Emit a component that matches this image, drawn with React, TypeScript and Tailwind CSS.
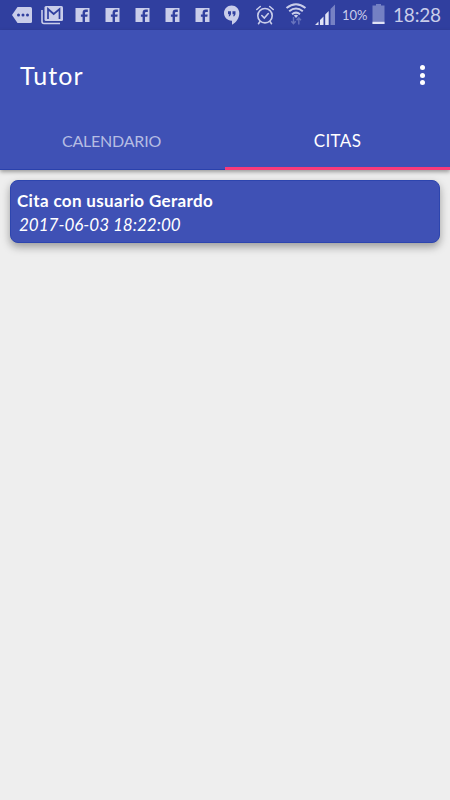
import type { ReactNode } from "react";

type SlotProps = {
  children: ReactNode;
};

const Slot = ({ children }: SlotProps) => (
  <div className="flex w-[30px] shrink-0 justify-center">{children}</div>
);

const MessageIcon = () => (
  <svg width="22" height="30" viewBox="0 0 22 30" fill="#c9cdea">
    <path d="M6.500 7H19.500Q21 7 21 8.500V21.500Q21 23 19.500 23H6.500L1 15Z" />
    <circle cx="7.500" cy="15" r="1.500" fill="#303f9f" />
    <circle cx="12" cy="15" r="1.500" fill="#303f9f" />
    <circle cx="16.500" cy="15" r="1.500" fill="#303f9f" />
  </svg>
);

const GmailIcon = () => (
  <svg width="24" height="30" viewBox="0 0 24 30" fill="none">
    <path d="M2 10V21.500Q2 23.500 4 23.500H20" stroke="#c9cdea" strokeWidth="1.600" />
    <rect x="4.500" y="6" width="18.500" height="15" rx="1.500" fill="#c9cdea" />
    <path d="M8 19V9L13.700 14L19.500 9V19" stroke="#303f9f" strokeWidth="1.700" />
  </svg>
);

const FacebookIcon = () => (
  <svg width="15" height="30" viewBox="0 0 15 30">
    <path d="M.5 8H14.500V22H.500Z" fill="#c9cdea" />
    <path
      d="M10 22V16.700H12.300L12.700 14.400H10V12.900Q10 11.900 11.100 11.900H12.800V9.600H10.800Q7.600 9.600 7.600 12.600V14.400H5.900V16.700H7.600V22Z"
      fill="#303f9f"
    />
  </svg>
);

const HangoutsIcon = () => (
  <svg width="18" height="30" viewBox="0 0 18 30">
    <path
      d="M8.600 5.500C4.400 5.500 1 8.900 1 13.100S4.400 20.700 8.600 20.700H9V24.800C13.200 22.800 16.300 18.400 16.300 13.100C16.300 8.900 12.800 5.500 8.600 5.500Z"
      fill="#c9cdea"
    />
    <path
      d="M5 11.200H8V14.200L6.800 16.200H5.600L6.300 14.200H5ZM9.500 11.200H12.500V14.200L11.300 16.200H10.100L10.800 14.200H9.500Z"
      fill="#303f9f"
    />
  </svg>
);

const AlarmIcon = () => (
  <svg
    width="20"
    height="30"
    viewBox="0 0 20 30"
    fill="none"
    stroke="#c9cdea"
    strokeWidth="1.600"
    strokeLinecap="round"
  >
    <circle cx="10" cy="15.700" r="7.200" />
    <path d="M6.800 15.500L9.300 18L13.300 13.500M1.800 9.500L5.300 6.500M18.200 9.500L14.700 6.500M5 21.500L3.500 23.700M15 21.500L16.500 23.700" />
  </svg>
);

const WifiIcon = () => (
  <svg width="24" height="30" viewBox="0 0 24 30" fill="none" stroke="#c9cdea" strokeWidth="2">
    <path d="M2.500 8Q12 .500 21.500 8M5.200 11.300Q12 5.800 18.800 11.300M8 14.200Q12 11 16 14.200" />
    <path d="M12 18L9.800 15.500Q12 14 14.200 15.500Z" fill="#c9cdea" stroke="none" />
    <path
      d="M9.500 17V23.500M7.300 21.300L9.500 23.800L11.700 21.300M14.800 24.500V18M12.600 20.200L14.800 17.700L17 20.200"
      stroke="#6874bd"
      strokeWidth="1.400"
    />
  </svg>
);

const SignalIcon = () => (
  <svg width="21" height="30" viewBox="0 0 21 30">
    <path d="M0 25L3.500 21.500V25ZM5 20L8.500 16.500V25H5Z" fill="#dfe2f5" />
    <path d="M10.200 14.500L13.700 11V25H10.200Z" fill="#dfe2f5" />
    <path d="M15.500 9L20 4.500V25H15.500Z" fill="#7782c4" />
  </svg>
);

const BatteryIcon = () => (
  <svg width="13" height="30" viewBox="0 0 13 30">
    <path d="M4 4H9V5.500H12.500V24H.500V5.500H4Z" fill="#7480c3" />
    <path d="M.5 21.800H12.500V24H.500Z" fill="#dfe2f5" />
  </svg>
);

const StatusBar = () => (
  <div className="flex h-[30px] items-center bg-[#303f9f] pl-[7px] text-[#c9cdea]">
    <Slot><MessageIcon /></Slot>
    <Slot><GmailIcon /></Slot>
    <Slot><FacebookIcon /></Slot>
    <Slot><FacebookIcon /></Slot>
    <Slot><FacebookIcon /></Slot>
    <Slot><FacebookIcon /></Slot>
    <Slot><FacebookIcon /></Slot>
    <Slot><HangoutsIcon /></Slot>
    <div className="ml-2 shrink-0"><AlarmIcon /></div>
    <div className="ml-[9px] shrink-0"><WifiIcon /></div>
    <div className="ml-[7px] shrink-0"><SignalIcon /></div>
    <span className="ml-[6px] w-[30px] shrink-0 pt-[2px] text-[13px]">10%</span>
    <BatteryIcon />
    <span className="ml-[8px] text-[19px] leading-[30px] tracking-[-0.2px]">18:28</span>
  </div>
);

const Header = () => (
  <header className="relative bg-[#3f51b5] text-white shadow-[0_2px_4px_rgba(0,0,0,0.35)]">
    <div className="flex h-[90px] items-center justify-between pr-[25px] pl-5">
      <h1 className="text-[25px] leading-8 tracking-[1.1px]">Tutor</h1>
      <button type="button" aria-label="Menu" className="flex flex-col gap-[2.500px]">
        <span className="size-[5px] rounded-full bg-white" />
        <span className="size-[5px] rounded-full bg-white" />
        <span className="size-[5px] rounded-full bg-white" />
      </button>
    </div>
    <nav className="grid h-[50px] grid-cols-2 text-[17px]">
      <div className="flex items-center justify-center border-b border-[#2a41ac] pt-px text-base tracking-[-0.2px] text-[#b6bde3]">
        <span className="-translate-x-px -translate-y-[4px]">CALENDARIO</span>
      </div>
      <div className="flex items-center justify-center border-b-[3px] border-[#f93a7a] tracking-[0.4px]">
        <span className="-translate-y-[3px]">CITAS</span>
      </div>
    </nav>
  </header>
);

export default function App() {
  return (
    <div className="h-[800px] w-full overflow-hidden bg-[#eeeeee] font-['Lato',sans-serif]">
      <StatusBar />
      <Header />
      <main className="px-[10px] pt-[10px]">
        <article className="h-[63px] rounded-lg border border-[#2d45ae] bg-[#3f51b5] pt-[8px] pl-[6px] text-white shadow-[0_4px_8px_rgba(0,0,0,0.35)]">
          <h2 className="text-[17px] leading-6 font-bold tracking-[0.35px]">Cita con usuario Gerardo</h2>
          <p className="pl-[2px] text-[17px] leading-6 italic">2017-06-03 18:22:00</p>
        </article>
      </main>
    </div>
  );
}
